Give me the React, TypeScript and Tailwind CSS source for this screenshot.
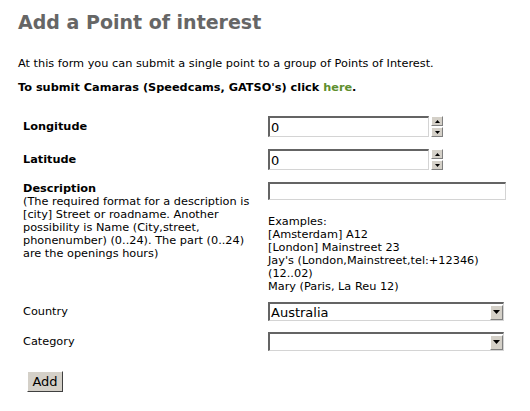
import React from "react";

function Spinner() {
  return (
    <div className="ml-[2px] flex w-[12px] flex-col gap-[1px]">
      {["up", "down"].map((d) => (
        <div
          key={d}
          className="flex h-[10px] w-[12px] items-center justify-center border border-t-white border-l-white border-b-[#808080] border-r-[#808080] bg-[#d4d0c8]"
        >
          <svg width="5" height="3" viewBox="0 0 5 3">
            {d === "up" ? <path d="M2.5 0L5 3H0z" fill="#000" /> : <path d="M0 0h5L2.5 3z" fill="#000" />}
          </svg>
        </div>
      ))}
    </div>
  );
}

function SelectBox({ value }: { value: string }) {
  return (
    <div className="flex h-[19px] w-[236px] items-center border-t-2 border-l-2 border-b border-r border-t-[#646464] border-l-[#646464] border-b-[#d4d4d4] border-r-[#d4d4d4] bg-white">
      <span className="flex-1 pl-[1px] text-[13px] leading-[15px] text-black">{value}</span>
      <div className="flex h-[15px] w-[13px] items-center justify-center border border-t-white border-l-white border-b-[#808080] border-r-[#808080] bg-[#d4d0c8]">
        <svg width="7" height="4" viewBox="0 0 7 4">
          <path d="M0 0h7L3.5 4z" fill="#000" />
        </svg>
      </div>
    </div>
  );
}

function NumberField() {
  return (
    <div className="flex items-start">
      <div className="flex h-[21px] w-[161px] items-center border-t-2 border-l-2 border-b border-r border-t-[#646464] border-l-[#646464] border-b-[#d4d4d4] border-r-[#d4d4d4] bg-white pl-[1px] text-[13px] text-black">
        0
      </div>
      <Spinner />
    </div>
  );
}

export default function App() {
  return (
    <div className="min-h-[411px] w-[530px] bg-white pl-[18px] pt-[10px] text-[11.3px] leading-[13px] text-black" style={{ fontFamily: '"DejaVu Sans", Verdana, sans-serif' }}>
      <h1 className="text-[19px] font-bold leading-[24px] text-[#666666]">Add a Point of interest</h1>

      <p className="mt-[23px]">At this form you can submit a single point to a group of Points of Interest.</p>
      <p className="mt-[11px] font-bold">
        To submit Camaras (Speedcams, GATSO's) click <a className="text-[#5e8f2e]">here</a>.
      </p>

      <div className="ml-[5px] mt-[22px] grid grid-cols-[245px_1fr] items-center gap-y-[12px]">
        <div className="font-bold">Longitude</div>
        <NumberField />

        <div className="font-bold">Latitude</div>
        <NumberField />

        <div className="self-start">
          <div className="font-bold">Description</div>
          <div>
            (The required format for a description is<br />
            [city] Street or roadname. Another<br />
            possibility is Name (City,street,<br />
            phonenumber) (0..24). The part (0..24)<br />
            are the openings hours)
          </div>
        </div>
        <div className="self-start">
          <div className="h-[18px] w-[238px] border-t-2 border-l-2 border-b border-r border-t-[#646464] border-l-[#646464] border-b-[#d4d4d4] border-r-[#d4d4d4] bg-white" />
          <div className="mt-[15px]">
            Examples:<br />
            [Amsterdam] A12<br />
            [London] Mainstreet 23<br />
            Jay's (London,Mainstreet,tel:+12346)<br />
            (12..02)<br />
            Mary (Paris, La Reu 12)
          </div>
        </div>

        <div className="mt-[-3px]">Country</div>
        <div className="mt-[-3px]">
          <SelectBox value="Australia" />
        </div>

        <div className="mt-[-1px]">Category</div>
        <div className="mt-[-1px]">
          <SelectBox value="" />
        </div>
      </div>

      <button className="ml-[9px] mt-[20px] h-[21px] w-[36px] border border-t-white border-l-white border-b-[#404040] border-r-[#404040] bg-[#d4d0c8] text-[13px] leading-[15px] text-black">
        Add
      </button>
    </div>
  );
}
